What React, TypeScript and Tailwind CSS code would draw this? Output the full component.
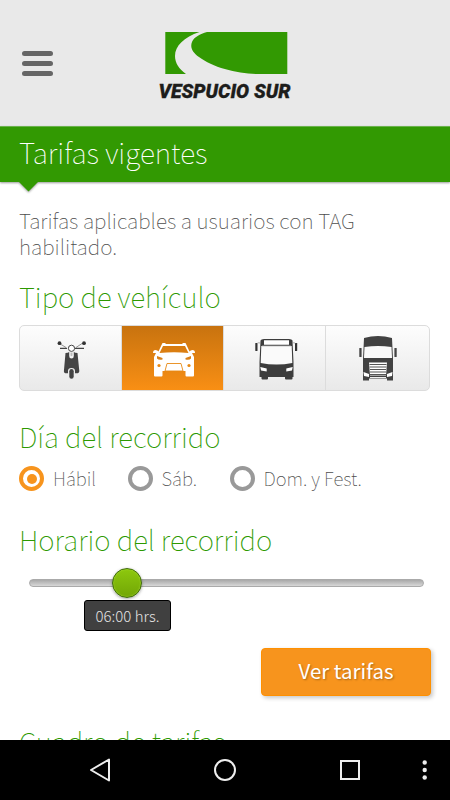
import React, { useState } from "react";

const heading =
  "h-[34px] whitespace-nowrap text-[27.700px] leading-[36px] font-thin text-[#2c9900]";

function Logo() {
  return (
    <svg width="140" height="74" viewBox="155 28 140 74" role="img" aria-label="Vespucio Sur">
      <path d="M165.300 32H199.500C184 37 175 46 175 56C175 63 179 69 186 74H165.300Z" fill="#329902" />
      <path d="M207 32H287.300V74H256C236 73.500 212 67 199 57C192 52 190 47 192 42C194 37 200 34 207 32Z" fill="#329902" />
      <text
        x="158.500"
        y="97.800"
        textLength="132"
        lengthAdjust="spacingAndGlyphs"
        fill="#1d1d1b"
        stroke="#1d1d1b"
        strokeWidth="0.3"
        className="font-['Roboto'] text-[20.500px] font-black italic"
      >
        VESPUCIO SUR
      </text>
    </svg>
  );
}

function Scooter() {
  return (
    <svg className="mt-[3px]" width="30" height="40" viewBox="0 0 30 40">
      <g stroke="#777" strokeWidth="0.8" fill="none">
        <path d="M3.500 3.500L10 7.500M26 3.500L20 7.500" />
      </g>
      <path d="M4 8.300H11M19 8.300H28" stroke="#444" strokeWidth="1.200" />
      <circle cx="3.500" cy="3.200" r="1.900" fill="#333" />
      <circle cx="28" cy="3.200" r="1.900" fill="#333" />
      <circle cx="15.500" cy="8.300" r="3.100" fill="#fff" stroke="#444" strokeWidth="1" />
      <path d="M9.500 13Q12 13 13.200 12V16Q13.200 18.500 15.500 18.500T17.800 16V12Q19 13 21.500 13L23.300 31Q23.300 33.300 20.500 33.300H19V31Q19 28 15.500 28T12 31V33.300H10.500Q7.700 33.300 7.900 31Z" fill="#444" />
      <rect x="13.300" y="29" width="4.400" height="9.700" rx="2.200" fill="#444" />
      <path d="M14.500 12.500V15.500Q15.500 17 16.500 15.500V12.500Z" fill="#bbb" />
    </svg>
  );
}

function Car() {
  return (
    <svg className="mt-[3px] ml-[2px]" width="44" height="34" viewBox="0 0 44 34">
      <path
        fillRule="evenodd"
        fill="#fff"
        d="M10.500 0H13L14 1H30L31 0H33.500L34.500 2L37.500 8.500Q38.500 7 40.500 7Q43 7.200 43 10H40L42 14V32.500Q42 33.500 41 33.500H34.500Q33.500 33.500 33.500 32.500V28H10.500V32.500Q10.500 33.500 9.500 33.500H3Q2 33.500 2 32.500V14L4 10H1Q1 7.200 3.500 7Q5.500 7 6.500 8.500L9.500 2ZM11 3L7.500 10Q22 8.300 36.500 10L33 3Z"
      />
      <path d="M5 13L10.500 15V16.500Q6.500 17.300 5 15.500ZM39 13L33.500 15V16.500Q37.500 17.300 39 15.500Z" fill="#d98018" />
      <path d="M15 20.500H29L31 28H13Z" fill="#fff" stroke="#e88913" strokeWidth="0.900" />
      <circle cx="7" cy="22.500" r="1.600" fill="#e88913" />
      <circle cx="37" cy="22.500" r="1.600" fill="#e88913" />
    </svg>
  );
}

function Bus() {
  return (
    <svg className="mt-[3px] -ml-[2px]" width="44" height="44" viewBox="0 0 44 44">
      <path d="M6.500 2.500Q7 1.300 10 1H35Q38 1.300 38.500 2.500L39.500 24V39H38.500V40.500Q38.500 41.500 37.500 41.500H32Q31 41.500 31 40.500V39H14V40.500Q14 41.500 13 41.500H8.500Q7.500 41.500 7.500 40.500V39H5.500V24Z" fill="#3d3d3d" />
      <path d="M10 2.200H35V6.700H10Z" fill="#fff" />
      <path d="M7.300 8H37.700L38.300 25Q22.500 28 6.700 25Z" fill="#fafafa" />
      <path d="M8 7.700H37" stroke="#777" strokeWidth="1" />
      <path d="M6.300 29L12.700 30.500V33.500L7 32.500ZM38.700 29L32.300 30.500V33.500L38 32.500Z" fill="#fff" />
      <rect x="1.300" y="5" width="2.200" height="8" rx=".6" fill="#333" />
      <rect x="41" y="5" width="2.200" height="8" rx=".6" fill="#333" />
      <path d="M3.500 5Q5 4.500 6 5M41 5Q39 4.500 38 5" stroke="#888" strokeWidth=".7" fill="none" />
    </svg>
  );
}

function Truck() {
  return (
    <svg className="mt-[1px]" width="40" height="48" viewBox="0 0 40 48">
      <path d="M6 3Q20 -1 34 3L35 24V45.500H29V43.500H11V45.500H5V24Z" fill="#424242" />
      <path d="M6.500 12Q20 10 33.500 12L34 23H6Z" fill="#fafafa" />
      <path d="M11 27.500H29L28 40.500H12Z" fill="#fff" />
      <path d="M11.500 29.500H28.500M11.700 32H28.300M12 34.500H28M12 37H28M12 39.500H28" stroke="#555" strokeWidth="1.100" />
      <path d="M5.500 37L11 39V42L6 41ZM34.500 37L29 39V42L34 41Z" fill="#fff" />
      <path d="M12 42.500H28" stroke="#eee" strokeWidth="1" />
      <rect x="1.300" y="13" width="2.300" height="9" rx=".6" fill="#444" />
      <rect x="36.400" y="13" width="2.300" height="9" rx=".6" fill="#444" />
    </svg>
  );
}

const vehicles = [
  { id: "moto", icon: <Scooter />, cell: "w-[102px]" },
  { id: "auto", icon: <Car />, cell: "w-[102px]" },
  { id: "bus", icon: <Bus />, cell: "w-[102px] pl-1" },
  { id: "camion", icon: <Truck />, cell: "flex-1" },
];

const days = [
  { label: "Hábil", width: "w-[108.500px]" },
  { label: "Sáb.", width: "w-[102px]" },
  { label: "Dom. y Fest.", width: "w-[180px]" },
];

export default function App() {
  const [vehicle, setVehicle] = useState("auto");
  const [day, setDay] = useState("Hábil");

  return (
    <div className="flex h-[800px] w-[450px] flex-col overflow-hidden bg-white font-['Noto_Sans_CJK_SC','Source_Sans_Pro',sans-serif]">
      <header className="flex h-[126px] shrink-0 items-start bg-[#e9e9e9]">
        <button aria-label="Menú" className="mt-[51px] ml-[22px] flex w-[31px] flex-col gap-[5px]">
          <span className="h-[5px] rounded-full bg-[#666]" />
          <span className="h-[5px] rounded-full bg-[#666]" />
          <span className="h-[5px] rounded-full bg-[#666]" />
        </button>
        <div className="mt-[28px] ml-[102px]">
          <Logo />
        </div>
      </header>

      <div className="relative h-14 shrink-0 border-t border-[#6bb34c] bg-[#329902] pl-[19px] shadow-[0_1px_2px_rgba(0,0,0,0.4)]">
        <h1 className="text-[28.200px] leading-[50px] font-thin whitespace-nowrap text-white">Tarifas vigentes</h1>
        <svg className="absolute top-[55px] left-[18px]" width="21" height="12" viewBox="0 0 21 12">
          <path d="M1 0L10.500 9.500L20 0Z" fill="#329902" className="drop-shadow-[0_1px_1px_rgba(0,0,0,0.4)]" />
        </svg>
      </div>

      <main className="flex h-[558px] flex-col overflow-hidden pt-[25px] pl-[19px]">
        <p className="h-[52px] shrink-0 text-[20.900px] leading-[26px] font-thin text-[#4d4d4d]">
          Tarifas aplicables a usuarios con TAG
          <br />
          habilitado.
        </p>

        <h2 className={`mt-[19px] shrink-0 ${heading}`}>Tipo de vehículo</h2>
        <div className="mt-[13px] flex h-[66px] w-[411px] shrink-0 overflow-hidden rounded-[5px] border border-[#dcdcdc] bg-linear-to-b from-[#fdfdfd] to-[#e9e9e9]">
          {vehicles.map((v) => (
            <button
              key={v.id}
              onClick={() => setVehicle(v.id)}
              className={`flex items-center justify-center border-r border-[#dcdcdc] last:border-r-0 ${v.cell} ${
                vehicle === v.id ? "bg-linear-to-b from-[#c8730f] to-[#f98f14]" : ""
              }`}
            >
              {v.icon}
            </button>
          ))}
        </div>

        <h2 className={`mt-[27px] shrink-0 ${heading}`}>Día del recorrido</h2>
        <div className="mt-[14px] flex h-[26px] shrink-0">
          {days.map((d) => (
            <label key={d.label} onClick={() => setDay(d.label)} className={`flex gap-[9px] ${d.width}`}>
              <span
                className={`flex size-[25px] shrink-0 items-center justify-center rounded-full border-4 bg-white ${
                  day === d.label ? "border-[#f7941d]" : "border-[#999]"
                }`}
              >
                {day === d.label && <span className="size-[10px] rounded-full bg-[#f7941d]" />}
              </span>
              <span className="text-[18.500px] leading-[25px] font-thin whitespace-nowrap text-[#4d4d4d]">{d.label}</span>
            </label>
          ))}
        </div>

        <h2 className={`mt-[29px] shrink-0 ${heading}`}>Horario del recorrido</h2>
        <div className="mt-[13px] ml-[10px] flex h-[29px] w-[395px] shrink-0 items-center">
          <div className="relative h-[8px] w-full rounded-full border border-[#aaa] bg-linear-to-b from-[#a9a9a9] to-[#d8d8d8]">
            <div className="absolute -top-[12px] left-[82px] size-[30px] rounded-full border border-[#3e6b0a] bg-linear-to-b from-[#8dc80e] to-[#72a606] shadow-[inset_0_0_2px_#b0e040,0_1px_3px_rgba(0,0,0,0.35)]" />
          </div>
        </div>
        <div className="mt-[3px] ml-[65px] h-[31px] w-[87px] shrink-0 rounded-[3px] border border-black bg-[#404040] text-center text-[15px] leading-[29px] font-light text-[#e4e4e4]">
          06:00 hrs.
        </div>

        <button className="mt-[17px] ml-[242px] h-[48px] w-[170px] shrink-0 rounded-[4px] border border-[#ff9000] bg-[#f7941d] pb-[3px] text-[20.500px] leading-[43px] font-normal text-white shadow-[2px_2px_4px_rgba(0,0,0,0.22)] text-shadow-[1px_1px_2px_rgba(0,0,0,0.3)]">
          Ver tarifas
        </button>

        <h2 className={`mt-[27px] shrink-0 ${heading}`}>Cuadro de tarifas</h2>
      </main>

      <nav className="h-[60px] shrink-0 bg-black">
        <svg width="450" height="60" viewBox="0 0 450 60" fill="none" stroke="#eee" strokeWidth="2">
          <path d="M109 19.500V40.500L91 30Z" strokeLinejoin="round" />
          <circle cx="225" cy="30" r="10" />
          <rect x="341" y="21" width="18" height="18" />
          <g fill="#eee" stroke="none">
            <circle cx="424.700" cy="22.500" r="2.200" />
            <circle cx="424.700" cy="30" r="2.200" />
            <circle cx="424.700" cy="37.500" r="2.200" />
          </g>
        </svg>
      </nav>
    </div>
  );
}
